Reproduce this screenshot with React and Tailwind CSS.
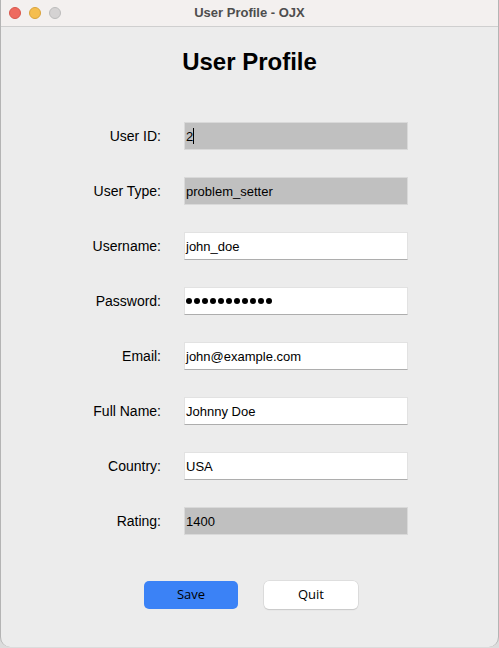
const fields = [
  { label: 'User ID:', value: '2', disabled: true, cursor: true },
  { label: 'User Type:', value: 'problem_setter', disabled: true },
  { label: 'Username:', value: 'john_doe' },
  { label: 'Password:', value: '', password: true },
  { label: 'Email:', value: 'john@example.com' },
  { label: 'Full Name:', value: 'Johnny Doe' },
  { label: 'Country:', value: 'USA' },
  { label: 'Rating:', value: '1400', disabled: true },
];

const sans = { fontFamily: '"Liberation Sans", Arial, sans-serif' };

function Field({ f }) {
  const base = f.disabled
    ? 'bg-[#c0c0c0] border border-[#d9d9d9]'
    : 'bg-white border border-[#e2e2e2] border-b-[#adadad]';
  return (
    <div className={`w-[224px] h-[28px] flex items-center pl-[1px] text-[13px] text-black ${base}`}>
      {f.password ? (
        <span className="flex gap-[2px] items-center">
          {Array.from({ length: 11 }).map((_, i) => (
            <span key={i} className="w-[6px] h-[6px] rounded-full bg-black" />
          ))}
        </span>
      ) : (
        <span className="leading-none">{f.value}</span>
      )}
      {f.cursor && <span className="w-px h-[16px] bg-black" />}
    </div>
  );
}

export default function App() {
  return (
    <div className="w-[499px] h-[648px] bg-[#dcdcdc]" style={sans}>
      <div className="w-[499px] h-[647px] bg-[#ececec] border-l border-r border-[#b4b4b4] rounded-b-[10px] overflow-hidden flex flex-col">
        <div className="h-[27px] shrink-0 bg-[#f3f0ef] border-b border-[#cfcfcf] relative flex items-center justify-center">
          <div className="absolute left-[8px] top-[7px] flex gap-[8px]">
            <span className="w-[12px] h-[12px] rounded-full bg-[#ee6a5f] border border-[#d8564b]" />
            <span className="w-[12px] h-[12px] rounded-full bg-[#f5be4f] border border-[#d9a33a]" />
            <span className="w-[12px] h-[12px] rounded-full bg-[#d5d3d3] border border-[#bcbcbc]" />
          </div>
          <span className="text-[13px] font-bold text-[#4d4d4d]">User Profile - OJX</span>
        </div>

        <h1 className="mt-[21px] text-[24px] leading-[28px] font-bold text-black text-center">User Profile</h1>

        <div className="mt-[46px] flex flex-col gap-[27px]">
          {fields.map((f) => (
            <div key={f.label} className="flex items-center">
              <div className="w-[160px] text-right text-[14px] text-black">{f.label}</div>
              <div className="ml-[23px]">
                <Field f={f} />
              </div>
            </div>
          ))}
        </div>

        <div className="mt-[46px] flex justify-center gap-[26px] pl-[3px]" style={{ fontFamily: '"Open Sans", "Liberation Sans", sans-serif' }}>
          <button className="w-[94px] h-[28px] rounded-[5px] bg-[#3b82f6] text-[13px] text-black">Save</button>
          <button className="w-[94px] h-[28px] rounded-[5px] bg-white text-[13px] text-black shadow-[0_0_0_0.5px_#d0d0d0,0_1px_1px_#c4c4c4]">Quit</button>
        </div>
      </div>
    </div>
  );
}
